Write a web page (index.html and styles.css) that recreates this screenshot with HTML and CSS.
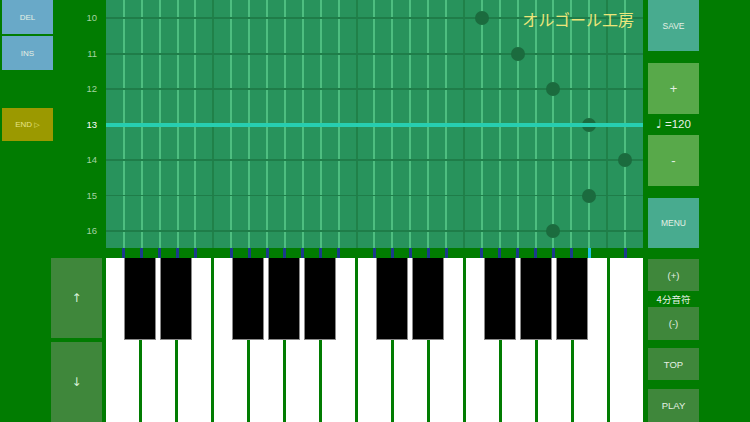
FILE: index.html
```html
<!DOCTYPE html>
<html>
<head>
<meta charset="utf-8">
<link rel="stylesheet" href="styles.css">
</head>
<body>
<div class="app">
  <div class="left">
    <div class="left-top">
      <div class="tools">
        <div class="btn blue del">DEL</div>
        <div class="btn blue ins">INS</div>
        <div class="btn olive end">END&nbsp;<span class="tri">▷</span></div>
      </div>
      <div class="labels">
        <div class="lab">10</div>
        <div class="lab">11</div>
        <div class="lab">12</div>
        <div class="lab cur">13</div>
        <div class="lab">14</div>
        <div class="lab">15</div>
        <div class="lab">16</div>
      </div>
    </div>
    <div class="left-bottom">
      <div class="btn dim arrow up">↑</div>
      <div class="btn dim arrow down">↓</div>
    </div>
  </div>

  <div class="center">
    <div class="roll">
      <div class="cols">
        <div class="col"></div>
        <div class="col"><i></i></div><div class="col"><i></i></div><div class="col"><i></i></div><div class="col"><i></i></div><div class="col"><i></i></div>
        <div class="col"><i class="dk"></i></div>
        <div class="col"><i></i></div><div class="col"><i></i></div><div class="col"><i></i></div><div class="col"><i></i></div><div class="col"><i></i></div><div class="col"><i></i></div><div class="col"><i></i></div>
        <div class="col"><i class="dk"></i></div>
        <div class="col"><i></i></div><div class="col"><i></i></div><div class="col"><i></i></div><div class="col"><i></i></div><div class="col"><i></i></div>
        <div class="col"><i class="dk"></i></div>
        <div class="col"><i></i></div><div class="col"><i></i></div><div class="col"><i></i></div><div class="col"><i></i></div><div class="col"><i></i></div><div class="col"><i></i></div><div class="col"><i></i></div>
        <div class="col"><i class="dk"></i></div>
        <div class="col"><i></i></div>
      </div>
      <div class="rows">
        <div class="row"></div>
        <div class="row"></div>
        <div class="row"></div>
        <div class="row"></div>
        <div class="row"></div>
        <div class="row"></div>
        <div class="row"></div>
      </div>
      <div class="note" style="left: calc(70% - 7px); top: 11px;"></div>
      <div class="note" style="left: calc(76.667% - 7px); top: 46.5px;"></div>
      <div class="note" style="left: calc(83.333% - 7px); top: 82px;"></div>
      <div class="note" style="left: calc(90% - 7px); top: 117.5px;"></div>
      <div class="note" style="left: calc(96.667% - 7px); top: 153px;"></div>
      <div class="note" style="left: calc(90% - 7px); top: 188.5px;"></div>
      <div class="note" style="left: calc(83.333% - 7px); top: 224px;"></div>
      <div class="playhead"></div>
      <div class="title">オルゴール工房</div>
    </div>

    <div class="strip">
      <div class="slot"></div>
      <div class="slot"><b></b></div><div class="slot"><b></b></div><div class="slot"><b></b></div><div class="slot"><b></b></div><div class="slot"><b></b></div>
      <div class="slot"></div>
      <div class="slot"><b></b></div><div class="slot"><b></b></div><div class="slot"><b></b></div><div class="slot"><b></b></div><div class="slot"><b></b></div><div class="slot"><b></b></div><div class="slot"><b></b></div>
      <div class="slot"></div>
      <div class="slot"><b></b></div><div class="slot"><b></b></div><div class="slot"><b></b></div><div class="slot"><b></b></div><div class="slot"><b></b></div>
      <div class="slot"></div>
      <div class="slot"><b></b></div><div class="slot"><b></b></div><div class="slot"><b></b></div><div class="slot"><b></b></div><div class="slot"><b></b></div><div class="slot"><b></b></div><div class="slot"><b class="on"></b></div>
      <div class="slot"></div>
      <div class="slot"><b></b></div>
    </div>

    <div class="keys">
      <div class="whites">
        <div class="wk"></div><div class="wk"></div><div class="wk"></div><div class="wk"></div><div class="wk"></div>
        <div class="wk"></div><div class="wk"></div><div class="wk"></div><div class="wk"></div><div class="wk"></div>
        <div class="wk"></div><div class="wk"></div><div class="wk"></div><div class="wk"></div><div class="wk"></div>
      </div>
      <div class="bk" style="left: 18px;"></div>
      <div class="bk" style="left: 54px;"></div>
      <div class="bk" style="left: 126px;"></div>
      <div class="bk" style="left: 162px;"></div>
      <div class="bk" style="left: 198px;"></div>
      <div class="bk" style="left: 270px;"></div>
      <div class="bk" style="left: 306px;"></div>
      <div class="bk" style="left: 378px;"></div>
      <div class="bk" style="left: 414px;"></div>
      <div class="bk" style="left: 450px;"></div>
    </div>
  </div>

  <div class="right">
    <div class="btn teal save">SAVE</div>
    <div class="btn light plus">+</div>
    <div class="tempo"><span class="qn">♩</span> =120</div>
    <div class="btn light minus">-</div>
    <div class="btn teal menu">MENU</div>
    <div class="btn dim small len-up">(+)</div>
    <div class="info">4分音符</div>
    <div class="btn dim small len-down">(-)</div>
    <div class="btn dim small top">TOP</div>
    <div class="btn dim small play">PLAY</div>
  </div>
</div>
</body>
</html>
```

FILE: styles.css
```css
html, body {
  margin: 0;
  padding: 0;
}
body {
  width: 750px;
  height: 422px;
  overflow: hidden;
  background: #017c01;
  font-family: "Liberation Sans", "Noto Sans CJK JP", sans-serif;
}
.app {
  display: flex;
  width: 750px;
  height: 422px;
}
.btn {
  display: flex;
  align-items: center;
  justify-content: center;
  color: #e4f0e4;
  box-sizing: border-box;
}

/* left column */
.left {
  width: 106px;
  display: flex;
  flex-direction: column;
}
.left-top {
  height: 258px;
  display: flex;
}
.tools {
  margin-left: 2px;
  width: 51px;
  display: flex;
  flex-direction: column;
}
.blue { background: #69a9c8; }
.olive { background: #9b9900; color: #e6e48a; }
.del { height: 34px; font-size: 8px; }
.ins { height: 34px; margin-top: 2px; font-size: 8px; }
.end { height: 33px; margin-top: 38px; font-size: 8px; }
.tri { font-family: "DejaVu Sans", sans-serif; font-size: 7px; }
.labels {
  width: 53px;
  display: flex;
  flex-direction: column;
}
.lab {
  height: 35.5px;
  line-height: 35.5px;
  text-align: right;
  padding-right: 9px;
  font-size: 9.5px;
  color: #a3d2a3;
}
.lab.cur { color: #ffffff; }
.left-bottom {
  display: flex;
  flex-direction: column;
  padding-left: 51px;
  gap: 4px;
}
.dim { background: #3f873b; }
.arrow {
  width: 51px;
  height: 80px;
  font-size: 12px;
  font-family: "DejaVu Sans", sans-serif;
  color: #d8f0d8;
}

/* center */
.center {
  width: 537px;
  display: flex;
  flex-direction: column;
}
.roll {
  position: relative;
  height: 248px;
  background: #28935c;
  overflow: hidden;
}
.cols {
  display: grid;
  grid-template-columns: repeat(30, 1fr);
  height: 100%;
}
.col { height: 100%; }
.col i {
  display: block;
  width: 2px;
  height: 100%;
  margin-left: -1px;
  background: #4ebe80;
}
.col i.dk { background: #208149; }
.rows {
  position: absolute;
  inset: 0;
  display: flex;
  flex-direction: column;
}
.row {
  height: 35.5px;
  flex: none;
  background: linear-gradient(to bottom, transparent 0, transparent calc(50% - 1px), #1f7d49 calc(50% - 1px), #1f7d49 calc(50% + 1px), transparent calc(50% + 1px));
}
.note {
  position: absolute;
  width: 14px;
  height: 14px;
  border-radius: 50%;
  background: #1b6b3e;
}
.playhead {
  position: absolute;
  left: 0;
  right: 0;
  top: 122.5px;
  height: 4px;
  background: #27ceb0;
}
.title {
  position: absolute;
  top: 7px;
  right: 9px;
  font-size: 16px;
  color: #ece67a;
  font-family: "Noto Sans CJK JP", sans-serif;
}
.strip {
  height: 10px;
  display: grid;
  grid-template-columns: repeat(30, 1fr);
}
.slot b {
  display: block;
  width: 3px;
  height: 10px;
  margin-left: -1.5px;
  background: #1c3a8d;
}
.slot b.on { background: #22c2e6; }
.keys {
  position: relative;
  height: 164px;
}
.whites {
  display: flex;
  gap: 3px;
  height: 100%;
}
.wk {
  width: 33px;
  flex: none;
  background: #ffffff;
}
.bk {
  position: absolute;
  top: 0;
  width: 32px;
  height: 82px;
  background: #000000;
  border: 1px solid #8a8a8a;
  border-top: none;
  box-sizing: border-box;
}

/* right column */
.right {
  margin-left: 5px;
  width: 51px;
  display: flex;
  flex-direction: column;
}
.teal { background: #48ab8f; }
.light { background: #58a94a; }
.save { height: 51px; font-size: 8.5px; }
.plus { height: 51px; margin-top: 12px; font-size: 13px; }
.tempo {
  height: 21px;
  line-height: 21px;
  text-align: center;
  font-size: 11.5px;
  color: #e8f2e8;
}
.qn { font-family: "DejaVu Sans", sans-serif; font-size: 12px; }
.minus { height: 51px; font-size: 13px; }
.menu { height: 50px; margin-top: 12px; font-size: 8.5px; }
.small { font-size: 9.5px; }
.len-up { height: 32px; margin-top: 11px; }
.info {
  height: 16px;
  line-height: 16px;
  text-align: center;
  font-size: 9.5px;
  color: #e8f2e8;
  font-family: "Noto Sans CJK JP", sans-serif;
}
.len-down { height: 33px; }
.top { height: 32px; margin-top: 8px; }
.play { height: 33px; margin-top: 9px; }
```
